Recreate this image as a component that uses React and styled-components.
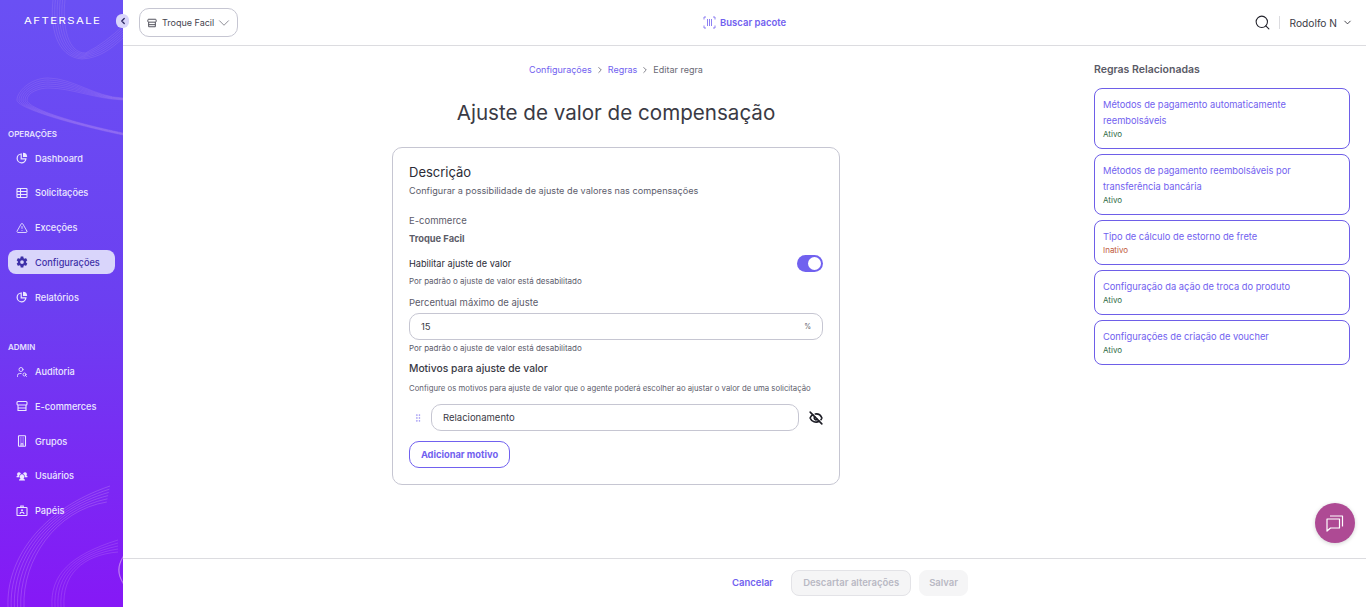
import React from "react"
import styled, { createGlobalStyle } from 'styled-components'
import {
  TriangleAlert, UserSearch,
  ChevronDown, ChevronRight, ChevronLeft, Search, EyeOff, GripVertical,
} from 'lucide-react'
import { IoSettingsSharp } from 'react-icons/io5'
import { PiUsersThreeFill } from 'react-icons/pi'

const GlobalStyle = createGlobalStyle`
  html, body {
    margin: 0;
    height: 100%;
    background: #fff;
    font-family: "Inter", "Liberation Sans", sans-serif;
    color: #2b2b36;
  }
  #root {
    height: 100%;
  }
  * {
    box-sizing: border-box;
  }
  svg {
    flex-shrink: 0;
  }
`;

const Page = styled.div`
  display: flex;
  width: 100%;
  height: 607px;
  overflow: hidden;
  position: relative;
`;

const Sidebar = styled.aside`
  width: 123px;
  flex-shrink: 0;
  position: relative;
  background: linear-gradient(180deg, #6a50f4 0%, #6c3ff1 50%, #8618f6 100%);
  color: #efeaff;
`;

const Curves = styled.svg`
  position: absolute;
  top: 0;
  left: 0;
  pointer-events: none;
`;

const Logo = styled.div`
  height: 42px;
  padding-left: 24px;
  display: flex;
  align-items: center;
  position: relative;
  font-size: 8.6px;
  color: #fff;
  span {
    display: inline-block;
    letter-spacing: 1.05px;
    transform: scaleX(1.33);
    transform-origin: left center;
  }
`;

const Collapse = styled.button`
  position: absolute;
  top: 14px;
  left: 116px;
  width: 13px;
  height: 14px;
  border: 0;
  padding: 0;
  border-radius: 6px;
  background: #d9d5fb;
  color: #2a2560;
  display: flex;
  align-items: center;
  justify-content: center;
  z-index: 2;
`;

const NavGroup = styled.nav`
  position: relative;
  padding: ${p => p.$top}px 8px 0;
  display: flex;
  flex-direction: column;
`;

const NavTitle = styled.div`
  font-size: 8px;
  font-weight: 600;
  height: 17.5px;
  line-height: 10px;
  color: #e6e0ff;
`;

const NavItem = styled.a`
  display: flex;
  align-items: center;
  gap: 7px;
  height: 24px;
  margin-bottom: 10.75px;
  padding-left: 8px;
  border-radius: 8px;
  font-size: 9.2px;
  font-weight: 500;
  color: ${p => p.$active ? '#3d2fa8' : '#ece8ff'};
  background: ${p => p.$active ? '#d9d5fb' : 'transparent'};
`;

const Column = styled.div`
  flex: 1;
  display: flex;
  flex-direction: column;
  min-width: 0;
`;

const Topbar = styled.header`
  height: 46px;
  flex-shrink: 0;
  border-bottom: 1px solid #dcdce0;
  display: flex;
  align-items: center;
  padding: 0 13px 0 16px;
`;

const StoreSelect = styled.div`
  width: 99px;
  height: 29px;
  display: flex;
  align-items: center;
  gap: 5px;
  padding: 0 7px;
  border: 1px solid #c6c6d2;
  border-radius: 10px;
  font-size: 9px;
  color: #44444f;
  white-space: nowrap;
  svg:last-child {
    margin-left: -4px;
    color: #6a6a75;
  }
`;

const ScanLink = styled.a`
  margin-left: 465px;
  display: flex;
  align-items: center;
  gap: 4px;
  font-size: 9.5px;
  font-weight: 600;
  color: #7161ef;
`;

const UserArea = styled.div`
  margin-left: auto;
  display: flex;
  align-items: center;
  color: #22222b;
`;

const Divider = styled.span`
  width: 1px;
  height: 13px;
  background: #dcdce0;
  margin: 0 10px 0 8px;
`;

const UserName = styled.span`
  font-size: 10.2px;
  margin-right: 5px;
  color: #3a3a45;
`;

const Content = styled.main`
  flex: 1;
  display: flex;
  align-items: flex-start;
  padding: 16px 16px 0 269px;
  gap: 254px;
`;

const Center = styled.section`
  width: 448px;
  flex-shrink: 0;
  display: flex;
  flex-direction: column;
  align-items: center;
`;

const Crumbs = styled.div`
  display: flex;
  align-items: center;
  gap: 3px;
  height: 15px;
  font-size: 9px;
  color: #6a6a75;
  a {
    color: #7161ef;
  }
`;

const Title = styled.h1`
  margin: 21px 0 19px;
  font-size: 20.6px;
  line-height: 30px;
  font-weight: 400;
  color: #3a3a44;
  white-space: nowrap;
`;

const Card = styled.div`
  width: 100%;
  border: 1px solid #c6c6d2;
  border-radius: 10px;
  padding: 16px;
`;

const CardTitle = styled.h2`
  margin: 0;
  font-size: 13px;
  line-height: 16px;
  font-weight: 400;
`;

const Muted = styled.p`
  margin: ${p => p.$top || 0}px 0 0;
  font-size: ${p => p.$size || 9.5}px;
  line-height: ${p => p.$line || 12}px;
  letter-spacing: ${p => p.$track || 0}px;
  color: #5c5c6b;
  white-space: nowrap;
`;

const Strong = styled.div`
  margin-top: 6px;
  font-size: 9.3px;
  line-height: 12px;
  font-weight: 700;
  color: #5c5c68;
`;

const ToggleRow = styled.div`
  margin-top: 10px;
  height: 17px;
  display: flex;
  align-items: center;
  justify-content: space-between;
  font-size: 9.2px;
  color: #2b2b36;
`;

const Toggle = styled.span`
  width: 26px;
  height: 17px;
  border-radius: 9px;
  background: #7161ef;
  padding: 2px;
  display: flex;
  justify-content: flex-end;
  &::after {
    content: "";
    width: 13px;
    height: 13px;
    border-radius: 50%;
    background: #fff;
  }
`;

const Field = styled.div`
  flex: ${p => p.$grow ? 1 : 'none'};
  height: 27px;
  margin-top: ${p => p.$top || 0}px;
  padding: 0 11px;
  display: flex;
  align-items: center;
  justify-content: space-between;
  border: 1px solid #c6c6d2;
  border-radius: 10px;
  font-size: 9.5px;
  color: #3a3a45;
  small {
    font-size: 7px;
    color: #5c5c6b;
  }
`;

const Subtitle = styled.h3`
  margin: 7px 0 0;
  font-size: 10.3px;
  line-height: 14px;
  font-weight: 500;
  color: #3a3a45;
`;

const ReasonRow = styled.div`
  margin-top: 10px;
  display: flex;
  align-items: center;
  color: #8f84f2;
  svg:first-child {
    margin: 0 8px 0 4px;
  }
  svg:last-child {
    margin-left: 10px;
    color: #1d1d25;
  }
`;

const OutlineButton = styled.button`
  display: block;
  margin-top: 10px;
  width: 101px;
  height: 27px;
  border: 1px solid #7161ef;
  border-radius: 10px;
  background: #fff;
  padding: 0;
  font-family: inherit;
  font-size: 9.3px;
  font-weight: 700;
  color: #7161ef;
`;

const Related = styled.aside`
  width: 256px;
  flex-shrink: 0;
`;

const RelatedTitle = styled.h4`
  margin: 0 0 11px;
  height: 15px;
  font-size: 10.5px;
  line-height: 15px;
  font-weight: 600;
  color: #5a5a66;
`;

const RuleList = styled.div`
  display: flex;
  flex-direction: column;
  gap: 5px;
`;

const Rule = styled.a`
  display: block;
  padding: 8px;
  border: 1px solid #6e5ee8;
  border-radius: 8px;
`;

const RuleName = styled.div`
  font-size: 9.3px;
  line-height: 16px;
  color: #7161ef;
`;

const RuleStatus = styled.div`
  font-size: 8px;
  line-height: 11px;
  color: ${p => p.$off ? '#c05a3c' : '#2f6b45'};
`;

const Footer = styled.footer`
  height: 49px;
  flex-shrink: 0;
  border-top: 1px solid #dcdce0;
  display: flex;
  align-items: center;
  padding-left: 609px;
`;

const TextButton = styled.a`
  font-size: 9.5px;
  font-weight: 600;
  color: #7161ef;
  margin: -2px 18px 0 0;
`;

const DisabledButton = styled.button`
  height: 26px;
  padding: 0 ${p => p.$pad}px 2px;
  margin-right: 8px;
  background: #f5f5f6;
  border: 1px solid ${p => p.$outlined ? '#e3e3e7' : '#f5f5f6'};
  border-radius: 8px;
  font-family: inherit;
  font-size: 9.5px;
  font-weight: 600;
  color: #b9b9c4;
`;

const ChatBubble = styled.button`
  position: absolute;
  left: 1315px;
  top: 503px;
  width: 40px;
  height: 40px;
  border: 0;
  padding: 0;
  border-radius: 50%;
  background: #ae4a94;
  box-shadow: 0 1px 4px rgba(0, 0, 0, 0.18);
  display: flex;
  align-items: center;
  justify-content: center;
`;

const ribbon = (make, count, step, opacity) =>
  Array.from({ length: count }, (_, i) => (
    <path key={i} d={make(i * step)} fill="none" stroke="#ecc4f2" strokeOpacity={opacity} strokeWidth="0.7" />
  ));

function SidebarCurves() {
  return (
    <Curves width="123" height="607" viewBox="0 0 123 607">
      {ribbon(o => `M${53 + o} 0 C${50 + o} 26 ${56 + o} ${57 - o * 0.3} ${82 + o * 0.3} ${59 - o * 0.5} C100 ${58 - o} 112 ${48 - o} 123 ${38 - o}`, 6, 2.4, 0.2)}
      {ribbon(o => `M123 ${98 + o * 0.2} C95 ${97 + o * 0.2} 72 ${78 + o} 48 ${78 + o} C${30 + o} ${78 + o} ${17 + o} 92 ${17 + o} 100 C${17 + o} 108 70 ${124 - o * 0.2} 123 ${135 - o * 0.2}`, 6, 2, 0.18)}
      {ribbon(o => `M${8 + o} 607 C${6 + o} 560 ${40 + o} 510 ${110 - o * 0.2} ${486 + o}`, 6, 3.2, 0.32)}
      {ribbon(o => `M${52 + o} 607 C${50 + o} 575 ${70 + o} 555 118 ${540 + o}`, 5, 3, 0.25)}
      {ribbon(o => `M123 ${556 + o * 0.4} C${118 - o * 0.2} 566 ${118 - o * 0.2} 574 123 ${584 - o * 0.4}`, 4, 1.6, 0.3)}
    </Curves>
  );
}

const ScanIcon = () => (
  <svg width="13" height="13" viewBox="0 0 13 13" fill="none" stroke="#7161ef" strokeWidth="0.8">
    <path d="M1 3.5V1h2M12 3.5V1h-2M1 9.5V12h2M12 9.5V12h-2M4.5 3v7M6.5 3v7M8.5 3v7" />
  </svg>
);

const ChatIcon = () => (
  <svg width="20" height="20" viewBox="0 0 20 20" fill="none" stroke="#fff" strokeWidth="1.2" strokeLinejoin="round">
    <path d="M5 3h12.5v10.5" />
    <path d="M2 6h12.5v9H5.5L2 18z" />
  </svg>
);

const StoreIcon = ({ size = 12 }) => (
  <svg width={size} height={size} viewBox="0 0 12 12" fill="none" stroke="currentColor" strokeWidth="1.1">
    <rect x="1" y="1.5" width="10" height="3.5" rx="1" />
    <path d="M2 5v5.5h8V5M2 8h8" />
  </svg>
);

const BadgeIcon = ({ size = 12 }) => (
  <svg width={size} height={size} viewBox="0 0 12 12" fill="none" stroke="currentColor" strokeWidth="1.1">
    <rect x="1" y="2.5" width="10" height="8" rx="0.6" />
    <path d="M4.8 2.5V1h2.4v1.5" />
    <circle cx="6" cy="5.3" r="1" fill="currentColor" stroke="none" />
    <path d="M4 9c0-1.2.8-1.8 2-1.8s2 .6 2 1.8" />
  </svg>
);

const PieIcon = ({ size = 12 }) => (
  <svg width={size} height={size} viewBox="0 0 12 12" fill="none" stroke="currentColor" strokeWidth="1.2">
    <path d="M5.2 2a4.4 4.4 0 1 0 4.7 4.9H5.2z" />
    <path d="M7 .8a4.3 4.3 0 0 1 4.2 4.2H7z" fill="currentColor" stroke="none" />
  </svg>
);

const TableIcon = ({ size = 12 }) => (
  <svg width={size} height={size} viewBox="0 0 12 12" fill="none" stroke="currentColor" strokeWidth="1.1">
    <rect x="1" y="1.5" width="10" height="9" rx="0.8" />
    <path d="M1 4.5h10M1 7.5h10M4.5 1.5v9" />
  </svg>
);

const TowerIcon = ({ size = 12 }) => (
  <svg width={size} height={size} viewBox="0 0 12 12" fill="none" stroke="currentColor" strokeWidth="1.1">
    <rect x="2.5" y="0.8" width="7" height="10.4" rx="0.5" />
    <path d="M4.4 3h1M6.6 3h1M4.4 5h1M6.6 5h1M4.4 7h1M6.6 7h1M5 11V8.8h2V11" />
  </svg>
);

const rules = [
  { name: 'Métodos de pagamento automaticamente reembolsáveis' },
  { name: 'Métodos de pagamento reembolsáveis por transferência bancária' },
  { name: 'Tipo de cálculo de estorno de frete', off: true },
  { name: 'Configuração da ação de troca do produto' },
  { name: 'Configurações de criação de voucher' },
];

const operations = [
  { label: 'Dashboard', Icon: PieIcon },
  { label: 'Solicitações', Icon: TableIcon },
  { label: 'Exceções', Icon: TriangleAlert },
  { label: 'Configurações', Icon: IoSettingsSharp, active: true },
  { label: 'Relatórios', Icon: PieIcon },
];

const admin = [
  { label: 'Auditoria', Icon: UserSearch },
  { label: 'E-commerces', Icon: StoreIcon },
  { label: 'Grupos', Icon: TowerIcon },
  { label: 'Usuários', Icon: PiUsersThreeFill },
  { label: 'Papéis', Icon: BadgeIcon },
];

const renderItems = items => items.map(({ label, Icon, active }) => (
  <NavItem key={label} $active={active}>
    <Icon size={12} strokeWidth={1.7} />
    {label}
  </NavItem>
));

export default function App() {
  return (
    <Page>
      <GlobalStyle />
      <Sidebar>
        <SidebarCurves />
        <Logo><span>AFTERSALE</span></Logo>
        <Collapse><ChevronLeft size={10} strokeWidth={3} /></Collapse>
        <NavGroup $top={86.5}>
          <NavTitle>OPERAÇÕES</NavTitle>
          {renderItems(operations)}
        </NavGroup>
        <NavGroup $top={22.25}>
          <NavTitle>ADMIN</NavTitle>
          {renderItems(admin)}
        </NavGroup>
      </Sidebar>

      <Column>
        <Topbar>
          <StoreSelect>
            <StoreIcon size={10} />
            Troque Facil
            <ChevronDown size={18} strokeWidth={1} />
          </StoreSelect>
          <ScanLink><ScanIcon />Buscar pacote</ScanLink>
          <UserArea>
            <Search size={17} strokeWidth={1.5} />
            <Divider />
            <UserName>Rodolfo N</UserName>
            <ChevronDown size={11} strokeWidth={1.8} />
          </UserArea>
        </Topbar>

        <Content>
          <Center>
            <Crumbs>
              <a>Configurações</a>
              <ChevronRight size={10} />
              <a>Regras</a>
              <ChevronRight size={10} />
              <span>Editar regra</span>
            </Crumbs>
            <Title>Ajuste de valor de compensação</Title>
            <Card>
              <CardTitle>Descrição</CardTitle>
              <Muted $top={5} $size={9.1} $track={0.03}>Configurar a possibilidade de ajuste de valores nas compensações</Muted>
              <Muted $top={18}>E-commerce</Muted>
              <Strong>Troque Facil</Strong>
              <ToggleRow>Habilitar ajuste de valor<Toggle /></ToggleRow>
              <Muted $top={3} $size={8}>Por padrão o ajuste de valor está desabilitado</Muted>
              <Muted $top={10}>Percentual máximo de ajuste</Muted>
              <Field $top={4}>15<small>%</small></Field>
              <Muted $top={2} $size={8}>Por padrão o ajuste de valor está desabilitado</Muted>
              <Subtitle>Motivos para ajuste de valor</Subtitle>
              <Muted $top={7} $size={7.75} $track={0.01}>Configure os motivos para ajuste de valor que o agente poderá escolher ao ajustar o valor de uma solicitação</Muted>
              <ReasonRow>
                <GripVertical size={10} strokeWidth={1.4} />
                <Field $grow>Relacionamento</Field>
                <EyeOff size={14} strokeWidth={2.8} />
              </ReasonRow>
              <OutlineButton>Adicionar motivo</OutlineButton>
            </Card>
          </Center>

          <Related>
            <RelatedTitle>Regras Relacionadas</RelatedTitle>
            <RuleList>
              {rules.map(rule => (
                <Rule key={rule.name}>
                  <RuleName>{rule.name}</RuleName>
                  <RuleStatus $off={rule.off}>{rule.off ? 'Inativo' : 'Ativo'}</RuleStatus>
                </Rule>
              ))}
            </RuleList>
          </Related>
        </Content>

        <Footer>
          <TextButton>Cancelar</TextButton>
          <DisabledButton $outlined $pad={11}>Descartar alterações</DisabledButton>
          <DisabledButton $pad={9}>Salvar</DisabledButton>
        </Footer>
      </Column>

      <ChatBubble><ChatIcon /></ChatBubble>
    </Page>
  )
}
